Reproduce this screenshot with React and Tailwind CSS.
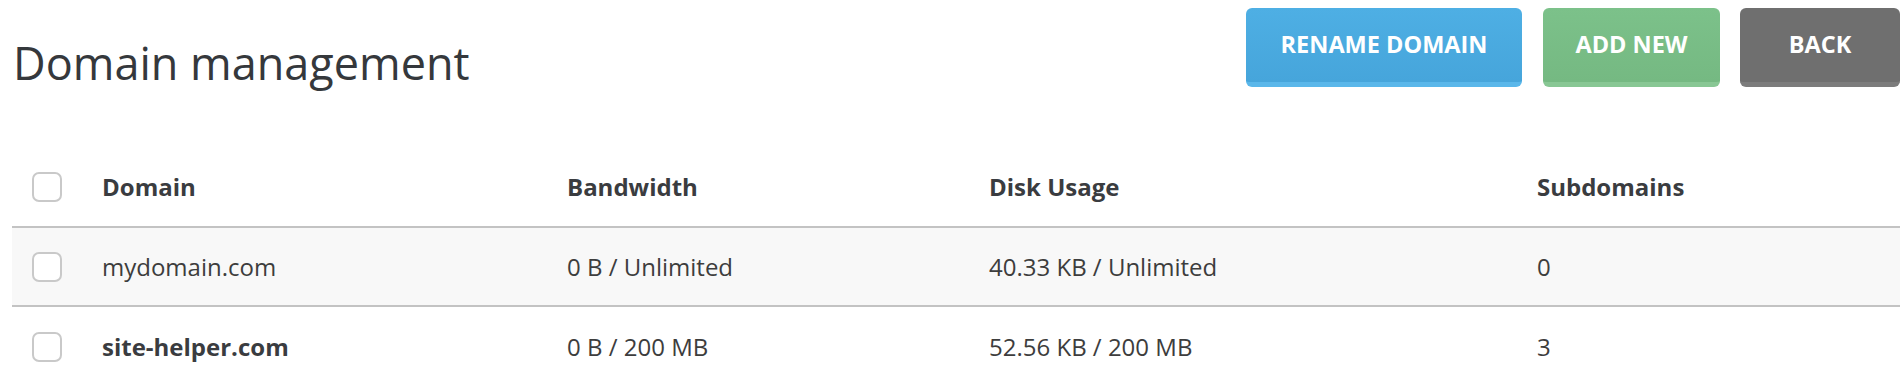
const rows = [
  { domain: "mydomain.com", bandwidth: "0 B / Unlimited", disk: "40.33 KB / Unlimited", subs: "0", bold: false, shaded: true },
  { domain: "site-helper.com", bandwidth: "0 B / 200 MB", disk: "52.56 KB / 200 MB", subs: "3", bold: true, shaded: false },
];

function Checkbox() {
  return <span className="block w-[30px] h-[30px] rounded-[7px] border-2 border-[#c9c9c9] bg-white" />;
}

const cols = "grid grid-cols-[70px_465px_422px_548px_1fr] items-center";

export default function App() {
  return (
    <div className="pl-3 pr-1 pt-2 font-['Open_Sans',sans-serif] bg-white min-h-[384px]">
      <div className="flex justify-between items-start">
        <h1 className="mt-6 text-[45px] leading-[62px] text-[#35383c] pl-[1px]">Domain management</h1>
        <div className="flex gap-5">
          <button className="w-[276px] h-[79px] rounded-[6px] bg-linear-to-b from-[#4eafe4] to-[#46a5db] border-b-[5px] border-[#5ab7ea] text-white font-bold text-[23.5px]">
            RENAME DOMAIN
          </button>
          <button className="w-[177px] h-[79px] rounded-[6px] bg-linear-to-b from-[#7cc18a] to-[#75b982] border-b-[5px] border-[#88c794] text-white font-bold text-[23.5px] ml-[1px]">
            ADD NEW
          </button>
          <button className="w-[160px] h-[79px] rounded-[6px] bg-[#6f6f6f] border-b-[5px] border-[#7c7c7c] text-white font-bold text-[23.5px]">
            BACK
          </button>
        </div>
      </div>

      <div className="mt-[54px] text-[24px]">
        <div className={`${cols} h-[80px] border-b-2 border-[#c3c3c3] font-bold text-[#3a3c40]`}>
          <div className="px-5"><Checkbox /></div>
          <div className="px-5">Domain</div>
          <div className="px-5">Bandwidth</div>
          <div className="px-5">Disk Usage</div>
          <div className="px-5">Subdomains</div>
        </div>
        {rows.map((r, i) => (
          <div
            key={r.domain}
            className={`${cols} h-[79px] text-[#3d3d3d] ${r.shaded ? "bg-[#f8f8f8]" : "bg-white"} ${i < rows.length - 1 ? "border-b-2 border-[#c3c3c3]" : ""}`}
          >
            <div className="px-5"><Checkbox /></div>
            <div className={`px-5 ${r.bold ? "font-bold text-[#3a3c40]" : ""}`}>{r.domain}</div>
            <div className="px-5">{r.bandwidth}</div>
            <div className="px-5">{r.disk}</div>
            <div className="px-5">{r.subs}</div>
          </div>
        ))}
      </div>
    </div>
  );
}
